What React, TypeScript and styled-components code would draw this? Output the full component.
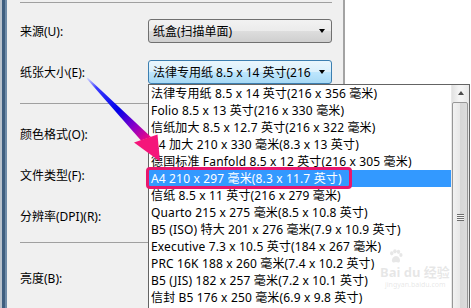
import styled, { createGlobalStyle } from 'styled-components'

const GlobalStyle = createGlobalStyle`
  html, body {
    margin: 0;
    padding: 0;
  }
  body {
    width: 471px;
    height: 308px;
    overflow: hidden;
    background: #f0f0f0;
    font-family: "Noto Sans", "Noto Sans CJK SC", sans-serif;
    font-size: 12px;
    color: #000;
  }
`

const Window = styled.div`
  position: relative;
  display: flex;
  width: 471px;
  height: 308px;
  overflow: hidden;
`

const Frame = styled.div`
  flex: none;
  width: 7px;
  background: linear-gradient(to right, #b9c3cd 0 2px, #3e5e7f 2px 5px, #6f8ca8 5px 7px);
`

const Main = styled.div`
  flex: none;
  width: 336px;
  box-sizing: border-box;
  padding: 2px 11px 0 13px;
  display: flex;
  flex-direction: column;
`

const Rule = styled.div<{ $top: number }>`
  margin-top: ${(p) => p.$top}px;
  height: 1px;
  background: #a0a0a0;
`

const Row = styled.div<{ $top: number }>`
  margin-top: ${(p) => p.$top}px;
  height: 24px;
  display: flex;
  align-items: center;
`

const Label = styled.div`
  flex: none;
  width: 128px;
  white-space: nowrap;
`

const Combo = styled.div<{ $focused?: boolean }>`
  flex: 1;
  min-width: 0;
  height: 24px;
  box-sizing: border-box;
  display: flex;
  align-items: center;
  padding: 0 6px 0 4px;
  border: 1px solid ${(p) => (p.$focused ? '#3c7fb1' : '#707070')};
  border-radius: 3px;
  background: ${(p) =>
    p.$focused
      ? 'linear-gradient(to bottom, #eaf6fd 0%, #d9f0fc 50%, #bee6fd 51%, #a7d9f5 100%)'
      : 'linear-gradient(to bottom, #f2f2f2 0%, #ebebeb 50%, #dddddd 51%, #cfcfcf 100%)'};
`

const ComboText = styled.span`
  flex: 1;
  min-width: 0;
  overflow: hidden;
  white-space: nowrap;
  margin-right: 7px;
`

const Caret = styled.span`
  flex: none;
  width: 0;
  height: 0;
  border-left: 3.5px solid transparent;
  border-right: 3.5px solid transparent;
  border-top: 4px solid #000;
`

const Preview = styled.div`
  flex: 1;
  background: #fff;
  border-left: 2px solid #a3a3a3;
`

const DropList = styled.div`
  position: absolute;
  left: 148px;
  top: 84px;
  width: 322px;
  height: 250px;
  box-sizing: border-box;
  display: flex;
  background: #fff;
  border: 1px solid #646464;
`

const Items = styled.div`
  flex: 1;
  display: flex;
  flex-direction: column;
  overflow: hidden;
`

const Item = styled.div<{ $selected?: boolean }>`
  height: 17px;
  line-height: 17px;
  padding-left: 2px;
  white-space: nowrap;
  letter-spacing: 0.15px;
  background: ${(p) => (p.$selected ? '#3399ff' : 'transparent')};
  color: ${(p) => (p.$selected ? '#fff' : '#000')};
`

const Scrollbar = styled.div`
  flex: none;
  width: 17px;
  display: flex;
  flex-direction: column;
  background: linear-gradient(to right, #e2e2e2, #f4f4f4 40%, #f4f4f4 60%, #e8e8e8);
  border-left: 1px solid #e9e9e9;
`

const ScrollButton = styled.div`
  height: 17px;
  display: flex;
  align-items: center;
  justify-content: center;

  &::after {
    content: '';
    width: 0;
    height: 0;
    border-left: 3.5px solid transparent;
    border-right: 3.5px solid transparent;
    border-bottom: 4px solid #4d4d4d;
  }
`

const Thumb = styled.div`
  height: 242px;
  margin: 1px 1px 0 0;
  box-sizing: border-box;
  border: 1px solid #979797;
  border-radius: 2px;
  background: linear-gradient(to right, #f2f2f2, #e8e8e8 50%, #d6d6d6 51%, #dcdcdc);
  display: flex;
  align-items: center;
  justify-content: center;
`

const Grip = styled.div`
  width: 7px;
  height: 7px;
  background: repeating-linear-gradient(to bottom, #6e6e6e 0 1px, #f5f5f5 1px 2px);
`

const Callout = styled.div`
  position: absolute;
  left: 146px;
  top: 167px;
  width: 206px;
  height: 22px;
  box-sizing: border-box;
  border: 3px solid #e8176d;
  border-radius: 4px;
`

const ArrowLayer = styled.svg`
  position: absolute;
  left: 0;
  top: 0;
  pointer-events: none;
`

const Watermark = styled.div`
  position: absolute;
  left: 380px;
  top: 249px;
  display: flex;
  flex-direction: column;
  align-items: flex-start;
  white-space: nowrap;
  color: rgba(185, 185, 185, 0.35);
  pointer-events: none;
`

const Paw = styled.svg`
  margin-left: 5px;
`

const MarkTitle = styled.div`
  font-size: 13px;
  font-weight: bold;
  line-height: 16px;
`

const MarkUrl = styled.div`
  margin-left: 5px;
  font-size: 7px;
  line-height: 10px;
`

const papers = [
  '法律专用纸 8.5 x 14 英寸(216 x 356 毫米)',
  'Folio 8.5 x 13 英寸(216 x 330 毫米)',
  '信纸加大 8.5 x 12.7 英寸(216 x 322 毫米)',
  'A4 加大 210 x 330 毫米(8.3 x 13 英寸)',
  '德国标准 Fanfold 8.5 x 12 英寸(216 x 305 毫米)',
  'A4 210 x 297 毫米(8.3 x 11.7 英寸)',
  '信纸 8.5 x 11 英寸(216 x 279 毫米)',
  'Quarto 215 x 275 毫米(8.5 x 10.8 英寸)',
  'B5 (ISO) 特大 201 x 276 毫米(7.9 x 10.9 英寸)',
  'Executive 7.3 x 10.5 英寸(184 x 267 毫米)',
  'PRC 16K 188 x 260 毫米(7.4 x 10.2 英寸)',
  'B5 (JIS) 182 x 257 毫米(7.2 x 10.1 英寸)',
  '信封 B5 176 x 250 毫米(6.9 x 9.8 英寸)',
]

export default function App() {
  return (
    <Window>
      <GlobalStyle />
      <Frame />
      <Main>
        <Rule $top={0} />
        <Row $top={16}>
          <Label>来源(U):</Label>
          <Combo>
            <ComboText>纸盒(扫描单面)</ComboText>
            <Caret />
          </Combo>
        </Row>
        <Row $top={17}>
          <Label>纸张大小(E):</Label>
          <Combo $focused>
            <ComboText>法律专用纸 8.5 x 14 英寸(216</ComboText>
            <Caret />
          </Combo>
        </Row>
        <Rule $top={19} />
        <Row $top={18}>
          <Label>颜色格式(O):</Label>
        </Row>
        <Row $top={17}>
          <Label>文件类型(F):</Label>
        </Row>
        <Row $top={17}>
          <Label>分辨率(DPI)(R):</Label>
        </Row>
        <Rule $top={14} />
        <Row $top={23}>
          <Label>亮度(B):</Label>
        </Row>
      </Main>
      <Preview />

      <DropList>
        <Items>
          {papers.map((p, i) => (
            <Item key={p} $selected={i === 5}>
              {p}
            </Item>
          ))}
        </Items>
        <Scrollbar>
          <ScrollButton />
          <Thumb>
            <Grip />
          </Thumb>
        </Scrollbar>
      </DropList>

      <Watermark>
        <Paw width="22" height="15" viewBox="0 0 14 14">
          <g fill="currentColor">
            <ellipse cx="3" cy="4" rx="1.6" ry="2" />
            <ellipse cx="6" cy="2.2" rx="1.6" ry="2" />
            <ellipse cx="9.3" cy="2.6" rx="1.6" ry="2" />
            <ellipse cx="11.6" cy="5.6" rx="1.5" ry="1.9" />
            <path d="M7 6.5 C4.5 6.5 2.5 10 3.5 11.8 C4.5 13.3 6 12.2 7 12.2 C8 12.2 9.5 13.3 10.5 11.8 C11.5 10 9.5 6.5 7 6.5 Z" />
          </g>
        </Paw>
        <MarkTitle>Bai du 经验</MarkTitle>
        <MarkUrl>jingyan.baidu.com</MarkUrl>
      </Watermark>

      <Callout />

      <ArrowLayer width="471" height="308">
        <defs>
          <linearGradient id="shaft" gradientUnits="userSpaceOnUse" x1="87" y1="78" x2="150" y2="142">
            <stop offset="0" stopColor="#d8dcff" />
            <stop offset="0.15" stopColor="#3a3aff" />
            <stop offset="0.5" stopColor="#0000e8" />
            <stop offset="0.75" stopColor="#8a00c8" />
            <stop offset="1" stopColor="#ff0a78" />
          </linearGradient>
        </defs>
        <polygon points="86.5,78.5 87.5,77.5 151,137 141,140.5" fill="url(#shaft)" />
        <polygon points="134,142.5 157.5,134.5 160,161.5" fill="#f5157a" />
      </ArrowLayer>
    </Window>
  )
}
